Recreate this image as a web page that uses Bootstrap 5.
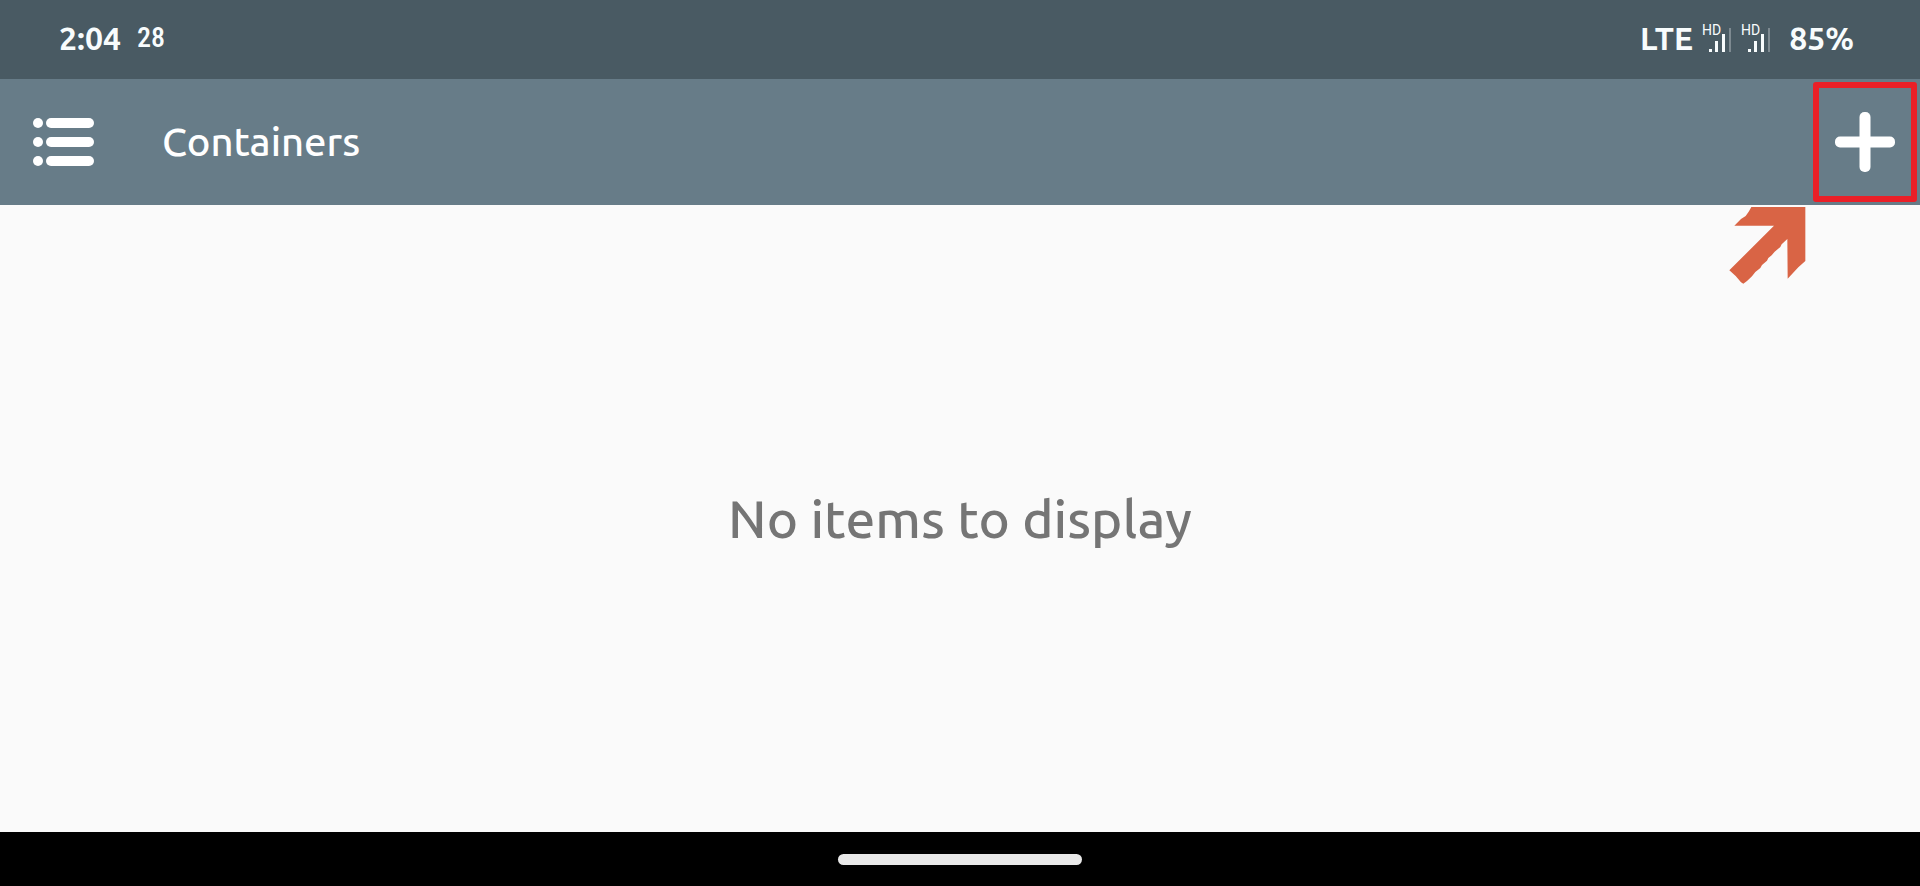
<!DOCTYPE html>
<html lang="en">
<head>
<meta charset="utf-8">
<meta name="viewport" content="width=device-width, initial-scale=1">
<title>Containers</title>
<link href="https://cdn.jsdelivr.net/npm/bootstrap@5.3.0/dist/css/bootstrap.min.css" rel="stylesheet">
<style>
  body { font-family: "Ubuntu", "Noto Sans", sans-serif; background: #fafafa; }
  .status-bar { background: #495a63; color: #f8fcfd; height: 79px; padding: 0 66px 4px 59px; font-size: 32px; line-height: 40px; font-weight: 600; }
  .status-date { font-family: "Roboto Condensed", "Open Sans Condensed", "Roboto", sans-serif; font-size: 28px; font-weight: 500; margin-left: 16px; }
  .network { margin-right: 8px; }
  .battery { margin-left: 10px; }
  .hd-label { font: 400 14px "Roboto", sans-serif; }
  .app-bar { background: #677c88; color: #fff; height: 126px; padding: 0 3px 0 33px; }
  .app-title { font-size: 40px; line-height: 52px; font-weight: 500; margin-left: 68px; }
  .add-btn { width: 104px; height: 120px; border: 6px solid #ea1f27; border-radius: 3px; }
  .pointer-arrow { top: 2px; right: 114px; }
  .empty-text { font-size: 53px; line-height: 68px; font-weight: 500; color: #757575; }
  .nav-strip { background: #000; height: 54px; }
  .home-pill { width: 244px; height: 11px; background: #e9e9e9; }
</style>
</head>
<body class="d-flex flex-column min-vh-100">
  <div class="status-bar d-flex align-items-center justify-content-between">
    <div class="d-flex align-items-center">
      <span>2:04</span>
      <span class="status-date">28</span>
    </div>
    <div class="d-flex align-items-center">
      <span class="network">LTE</span>
      <svg width="39" height="32" viewBox="0 0 39 32" fill="#f8fcfd" aria-hidden="true">
        <text class="hd-label" x="1" y="13">HD</text>
        <path d="M8 27h3v3H8zM14 19h3v11h-3zM21 12h3v18h-3z"/><path d="M28 6h2v24h-2z" opacity=".3"/>
      </svg>
      <svg width="39" height="32" viewBox="0 0 39 32" fill="#f8fcfd" aria-hidden="true">
        <text class="hd-label" x="1" y="13">HD</text>
        <path d="M8 27h3v3H8zM14 19h3v11h-3zM21 12h3v18h-3z"/><path d="M28 6h2v24h-2z" opacity=".3"/>
      </svg>
      <span class="battery">85%</span>
    </div>
  </div>

  <header class="app-bar d-flex align-items-center">
    <button type="button" class="btn p-0 border-0 d-flex" aria-label="Menu">
      <svg width="61" height="48" viewBox="0 0 61 48" fill="#fff" aria-hidden="true">
        <circle cx="5" cy="5" r="5"/><rect x="13" y="0" width="48" height="10" rx="5"/>
        <circle cx="5" cy="24" r="5"/><rect x="13" y="19" width="48" height="10" rx="5"/>
        <circle cx="5" cy="43" r="5"/><rect x="13" y="38" width="48" height="10" rx="5"/>
      </svg>
    </button>
    <h1 class="app-title mb-0">Containers</h1>
    <button type="button" class="add-btn btn p-0 ms-auto d-flex align-items-center justify-content-center" aria-label="Add container">
      <svg width="60" height="60" viewBox="0 0 60 60" fill="#fff" aria-hidden="true">
        <rect x="0" y="24.5" width="60" height="11" rx="5"/><rect x="24.5" y="0" width="11" height="60" rx="5"/>
      </svg>
    </button>
  </header>

  <main class="flex-grow-1 position-relative d-flex align-items-center justify-content-center">
    <svg class="pointer-arrow position-absolute" width="77" height="77" viewBox="0 0 231 231" fill="#d96445" aria-hidden="true">
      <path d="M67 0H229V162L208 181 176 215 175 96 158 112 154 120 137 134 128 145 118 153 114 161 99 174 94 183 79 195 69 208 54 222 43 230 36 226 20 207 1 190 135 56H16L36 36 50 27 60 13Z"/>
    </svg>
    <p class="empty-text mb-0">No items to display</p>
  </main>

  <footer class="nav-strip d-flex align-items-center justify-content-center">
    <div class="home-pill rounded-pill"></div>
  </footer>
<script src="https://cdn.jsdelivr.net/npm/bootstrap@5.3.0/dist/js/bootstrap.bundle.min.js"></script>
</body>
</html>
